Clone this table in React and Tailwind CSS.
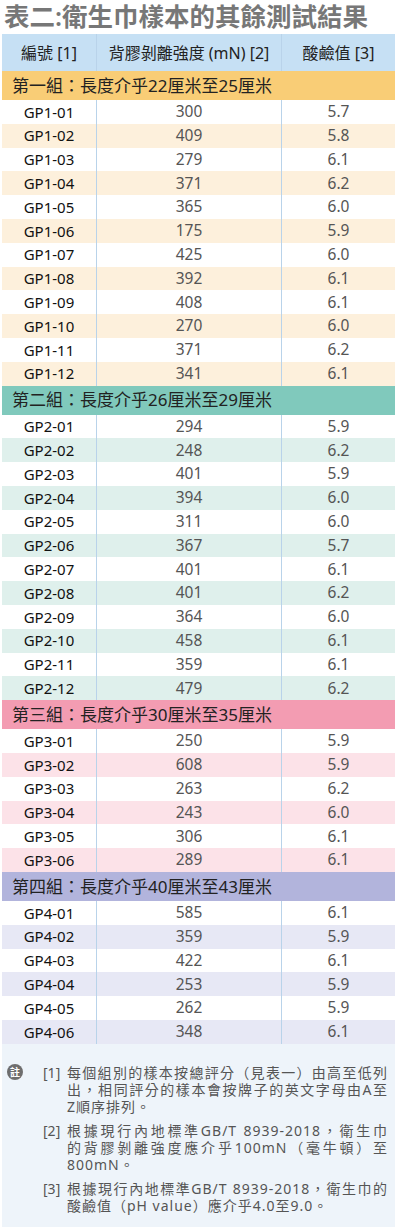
import React from "react";

const groups = [
  {
    title: "第一組：長度介乎22厘米至25厘米",
    head: "bg-[#f9cd76]",
    stripe: "bg-[#fdf0dc]",
    rows: [
      ["GP1-01", "300", "5.7"],
      ["GP1-02", "409", "5.8"],
      ["GP1-03", "279", "6.1"],
      ["GP1-04", "371", "6.2"],
      ["GP1-05", "365", "6.0"],
      ["GP1-06", "175", "5.9"],
      ["GP1-07", "425", "6.0"],
      ["GP1-08", "392", "6.1"],
      ["GP1-09", "408", "6.1"],
      ["GP1-10", "270", "6.0"],
      ["GP1-11", "371", "6.2"],
      ["GP1-12", "341", "6.1"],
    ],
  },
  {
    title: "第二組：長度介乎26厘米至29厘米",
    head: "bg-[#80c9bc]",
    stripe: "bg-[#dff0ec]",
    rows: [
      ["GP2-01", "294", "5.9"],
      ["GP2-02", "248", "6.2"],
      ["GP2-03", "401", "5.9"],
      ["GP2-04", "394", "6.0"],
      ["GP2-05", "311", "6.0"],
      ["GP2-06", "367", "5.7"],
      ["GP2-07", "401", "6.1"],
      ["GP2-08", "401", "6.2"],
      ["GP2-09", "364", "6.0"],
      ["GP2-10", "458", "6.1"],
      ["GP2-11", "359", "6.1"],
      ["GP2-12", "479", "6.2"],
    ],
  },
  {
    title: "第三組：長度介乎30厘米至35厘米",
    head: "bg-[#f39cb2]",
    stripe: "bg-[#fce2e8]",
    rows: [
      ["GP3-01", "250", "5.9"],
      ["GP3-02", "608", "5.9"],
      ["GP3-03", "263", "6.2"],
      ["GP3-04", "243", "6.0"],
      ["GP3-05", "306", "6.1"],
      ["GP3-06", "289", "6.1"],
    ],
  },
  {
    title: "第四組：長度介乎40厘米至43厘米",
    head: "bg-[#b2b4dc]",
    stripe: "bg-[#e7e8f5]",
    rows: [
      ["GP4-01", "585", "6.1"],
      ["GP4-02", "359", "5.9"],
      ["GP4-03", "422", "6.1"],
      ["GP4-04", "253", "5.9"],
      ["GP4-05", "262", "5.9"],
      ["GP4-06", "348", "6.1"],
    ],
  },
];

const font = { fontFamily: '"Noto Sans", "Noto Sans CJK TC", sans-serif' };

function Row({ cells, bg }) {
  return (
    <div className={`grid grid-cols-[95px_185px_1fr] h-[23.8px] items-center ${bg}`}>
      <div className="h-full flex items-center justify-center border-r border-[#b9d3ea] text-[15px] text-[#111]">
        {cells[0]}
      </div>
      <div className="h-full flex items-center justify-center border-r border-[#b9d3ea] text-[15.5px] text-[#555]">
        {cells[1]}
      </div>
      <div className="h-full flex items-center justify-center text-[15.5px] text-[#555]">
        {cells[2]}
      </div>
    </div>
  );
}

function Note({ num, lines }) {
  return (
    <div className="flex mt-[7px] first:mt-0">
      <span className="w-[24px] shrink-0 text-[14px] leading-[17px]">[{num}]</span>
      <div className="flex-1">
        {lines.map((l, i) => (
          <div
            key={i}
            className={`text-[14px] leading-[17px] tracking-[1px] ${i < lines.length - 1 ? "[text-align-last:justify] text-justify" : ""}`}
          >
            {l}
          </div>
        ))}
      </div>
    </div>
  );
}

export default function App() {
  return (
    <div className="w-[400px] bg-white" style={font}>
      <h1 className="h-[34px] pl-[4px] text-[25.5px] leading-[32px] font-semibold text-[#777] whitespace-nowrap">
        表二:衛生巾樣本的其餘測試結果
      </h1>

      <div className="mx-[2px] w-[393px]">
        <div className="grid grid-cols-[95px_185px_1fr] h-[37px] items-center bg-[#c6e0f4] text-[16px] text-[#222]">
          <div className="h-full flex items-center justify-center border-r border-[#b9d3ea]">編號 [1]</div>
          <div className="h-full flex items-center justify-center border-r border-[#b9d3ea]">背膠剝離強度 (mN) [2]</div>
          <div className="h-full flex items-center justify-center">酸鹼值 [3]</div>
        </div>

        {groups.map((g) => (
          <div key={g.title}>
            <div className={`h-[29px] flex items-center pl-[10px] text-[17px] text-[#222] ${g.head}`}>
              {g.title}
            </div>
            {g.rows.map((r, i) => (
              <Row key={r[0]} cells={r} bg={i % 2 === 1 ? g.stripe : "bg-white"} />
            ))}
          </div>
        ))}

        <div className="bg-[#eef4fa] pt-[20px] pb-[14px] pl-[5px] pr-[7px] flex text-[#555]">
          <div className="w-[16px] h-[16px] shrink-0 rounded-full bg-[#6e6e6e] text-white text-[10px] font-bold leading-none flex items-center justify-center">
            註
          </div>
          <div className="ml-[20px] flex-1">
            <Note
              num="1"
              lines={[
                "每個組別的樣本按總評分（見表一）由高至低列",
                "出，相同評分的樣本會按牌子的英文字母由A至",
                "Z順序排列。",
              ]}
            />
            <Note
              num="2"
              lines={[
                "根據現行內地標準GB/T 8939-2018，衛生巾",
                "的背膠剝離強度應介乎100mN（毫牛頓）至",
                "800mN。",
              ]}
            />
            <Note
              num="3"
              lines={[
                "根據現行內地標準GB/T 8939-2018，衛生巾的",
                "酸鹼值（pH value）應介乎4.0至9.0。",
              ]}
            />
          </div>
        </div>
      </div>
    </div>
  );
}
